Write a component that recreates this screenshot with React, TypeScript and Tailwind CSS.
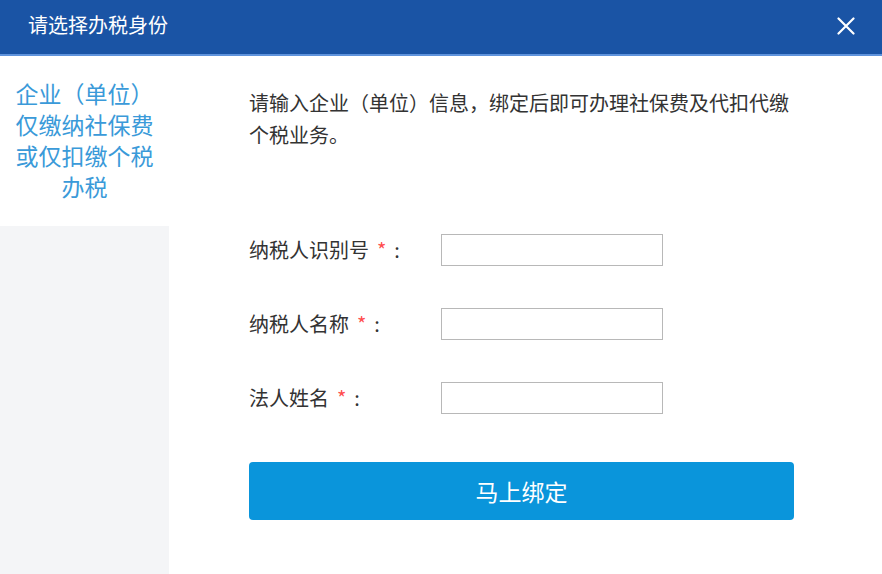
import React from 'react';

const FONT = '"Microsoft YaHei", "Noto Sans CJK SC", "Liberation Sans", sans-serif';

const fields = ['纳税人识别号', '纳税人名称', '法人姓名'];

export default function App() {
  return (
    <div className="w-[882px] h-[574px] flex flex-col bg-white overflow-hidden" style={{ fontFamily: FONT }}>
      {/* Header */}
      <div className="h-[56px] shrink-0 flex items-center justify-between bg-[#1a54a5] border-b-2 border-[#5f93dc] pl-[28px] pr-[27px]">
        <span className="text-white text-[20px] leading-none -mt-[4px]">请选择办税身份</span>
        <svg width="18" height="18" viewBox="0 0 18 18" className="-mt-[2px]">
          <path d="M1.5 1.5 L16.5 16.5 M16.5 1.5 L1.5 16.5" stroke="#fff" strokeWidth="2.2" strokeLinecap="round" />
        </svg>
      </div>

      <div className="flex flex-1 min-h-0">
        {/* Sidebar */}
        <div className="w-[169px] shrink-0 flex flex-col">
          <div className="h-[170px] bg-white px-[10px] pt-[22px] text-center text-[23px] leading-[31px] text-[#3a9ad9]">
            企业（单位）仅缴纳社保费或仅扣缴个税办税
          </div>
          <div className="flex-1 bg-[#f4f5f7]" />
        </div>

        {/* Main */}
        <div className="flex-1 pl-[80px] pr-[88px] pt-[31px]">
          <p className="text-[20px] leading-[32px] text-[#333]">
            请输入企业（单位）信息，绑定后即可办理社保费及代扣代缴个税业务。
          </p>

          <div className="mt-[83px] flex flex-col gap-[42px]">
            {fields.map((f) => (
              <div key={f} className="flex items-center h-[32px]">
                <label className="w-[192px] text-[20px] text-[#333] leading-none">
                  {f}
                  <span className="ml-[8px] text-[#ff4d4d]">*</span>
                  <span className="ml-[8px]">:</span>
                </label>
                <input className="w-[222px] h-[32px] border border-[#b8b8b8] bg-white outline-none" />
              </div>
            ))}
          </div>

          <button className="mt-[48px] w-full h-[58px] rounded-[4px] bg-[#0a95db] text-white text-[23px]">
            马上绑定
          </button>
        </div>
      </div>
    </div>
  );
}
